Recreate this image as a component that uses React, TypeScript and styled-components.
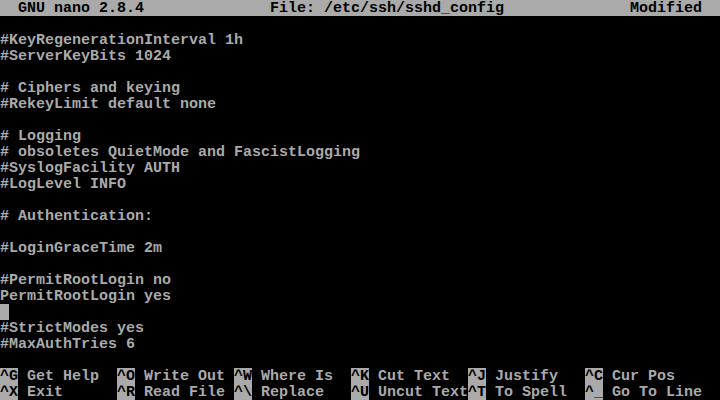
import React from "react";
import styled, { createGlobalStyle } from "styled-components";

const Global = createGlobalStyle`
  html, body { margin: 0; padding: 0; background: #000; }
  body { width: 720px; height: 400px; overflow: hidden; }
`;

const Screen = styled.div`
  width: 720px;
  height: 400px;
  background: #000;
  color: #aaaaaa;
  font-family: "Liberation Mono", "DejaVu Sans Mono", monospace;
  font-size: 15px;
  font-weight: bold;
  line-height: 18px;
  display: flex;
  flex-direction: column;
  white-space: pre;
  overflow: hidden;
`;

const TitleBar = styled.div`
  height: 16px;
  flex: none;
  background: #aaaaaa;
  color: #000;
  display: grid;
  grid-template-columns: 270px 360px 90px;
  grid-template-rows: 16px;
`;

const Line = styled.div`
  height: 16px;
  flex: none;
`;

const Cursor = styled.span`
  display: inline-block;
  width: 9px;
  height: 16px;
  background: #aaaaaa;
  vertical-align: top;
`;

const Shortcuts = styled.div`
  display: grid;
  grid-template-columns: repeat(5, 117px) 135px;
  grid-auto-rows: 16px;
  flex: none;
`;

const Item = styled.div`
  display: flex;
  height: 16px;
`;

const Key = styled.span`
  background: #aaaaaa;
  color: #000;
  width: 18px;
  height: 16px;
`;

const Label = styled.span`
  padding-left: 9px;
`;

const lines = [
  "",
  "#KeyRegenerationInterval 1h",
  "#ServerKeyBits 1024",
  "",
  "# Ciphers and keying",
  "#RekeyLimit default none",
  "",
  "# Logging",
  "# obsoletes QuietMode and FascistLogging",
  "#SyslogFacility AUTH",
  "#LogLevel INFO",
  "",
  "# Authentication:",
  "",
  "#LoginGraceTime 2m",
  "",
  "#PermitRootLogin no",
  "PermitRootLogin yes",
  "__CURSOR__",
  "#StrictModes yes",
  "#MaxAuthTries 6",
  "",
];

const shortcuts: [string, string][] = [
  ["^G", "Get Help"],
  ["^O", "Write Out"],
  ["^W", "Where Is"],
  ["^K", "Cut Text"],
  ["^J", "Justify"],
  ["^C", "Cur Pos"],
  ["^X", "Exit"],
  ["^R", "Read File"],
  ["^\\", "Replace"],
  ["^U", "Uncut Text"],
  ["^T", "To Spell"],
  ["^_", "Go To Line"],
];

export default function App() {
  return (
    <>
      <Global />
      <Screen>
        <TitleBar>
          <span>{"  GNU nano 2.8.4"}</span>
          <span>{"File: /etc/ssh/sshd_config"}</span>
          <span>{"Modified"}</span>
        </TitleBar>
        {lines.map((l, i) => (
          <Line key={i}>{l === "__CURSOR__" ? <Cursor /> : l}</Line>
        ))}
        <Shortcuts>
          {shortcuts.map(([k, label]) => (
            <Item key={k}>
              <Key>{k}</Key>
              <Label>{label}</Label>
            </Item>
          ))}
        </Shortcuts>
      </Screen>
    </>
  );
}
